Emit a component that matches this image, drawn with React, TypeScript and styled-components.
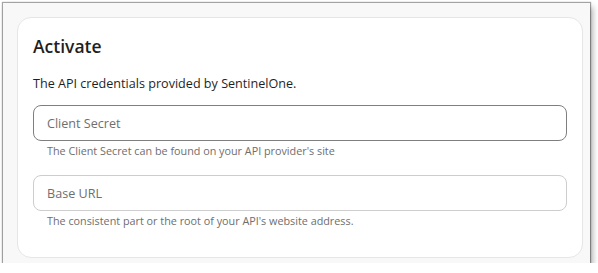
import React from 'react';
import styled, { createGlobalStyle } from 'styled-components';

const GlobalStyle = createGlobalStyle`
  body {
    margin: 0;
    background: #ffffff;
    font-family: 'Open Sans', 'Noto Sans', sans-serif;
  }
`;

const Window = styled.div`
  box-sizing: border-box;
  margin: 3px 0 0 3px;
  width: 587px;
  height: 260px;
  padding: 14px 7px 5px 14px;
  background: #f8f8f8;
  box-shadow: 0 0 1px 1px rgba(0, 0, 0, 0.35), 3px 4px 6px rgba(0, 0, 0, 0.3);
`;

const Card = styled.section`
  box-sizing: border-box;
  height: 100%;
  padding: 16px 15px 0 15px;
  background: #ffffff;
  border: 1px solid #e6e6e6;
  border-radius: 14px;
`;

const Title = styled.h2`
  margin: 0;
  font-size: 17.5px;
  font-weight: 600;
  line-height: 24px;
  color: #1f1f1f;
`;

const Description = styled.p`
  margin: 17px 0 12px;
  font-size: 12.6px;
  line-height: 18px;
  color: #1f1f1f;
`;

const Field = styled.div`
  display: flex;
  flex-direction: column;
  margin-bottom: 17px;
`;

const Input = styled.input<{ $active?: boolean }>`
  box-sizing: border-box;
  width: 100%;
  height: 36px;
  padding: 0 13px;
  border: 1px solid ${(p) => (p.$active ? '#7f7f7f' : '#cdcdcd')};
  border-radius: 8px;
  background: #ffffff;
  font-family: inherit;
  font-size: 12.6px;
  color: #333;
  outline: none;

  &::placeholder {
    color: #6f6f6f;
  }
`;

const Hint = styled.span`
  margin: 2px 0 0 14px;
  font-size: 10.8px;
  line-height: 15px;
  color: #6e6e6e;
`;

const fields = [
  {
    name: 'Client Secret',
    hint: "The Client Secret can be found on your API provider's site",
    active: true,
  },
  {
    name: 'Base URL',
    hint: "The consistent part or the root of your API's website address.",
    active: false,
  },
];

const App: React.FC = () => {
  return (
    <>
      <GlobalStyle />
      <Window>
        <Card>
          <Title>Activate</Title>
          <Description>The API credentials provided by SentinelOne.</Description>
          {fields.map((f) => (
            <Field key={f.name}>
              <Input $active={f.active} placeholder={f.name} />
              <Hint>{f.hint}</Hint>
            </Field>
          ))}
        </Card>
      </Window>
    </>
  );
};

export default App;
